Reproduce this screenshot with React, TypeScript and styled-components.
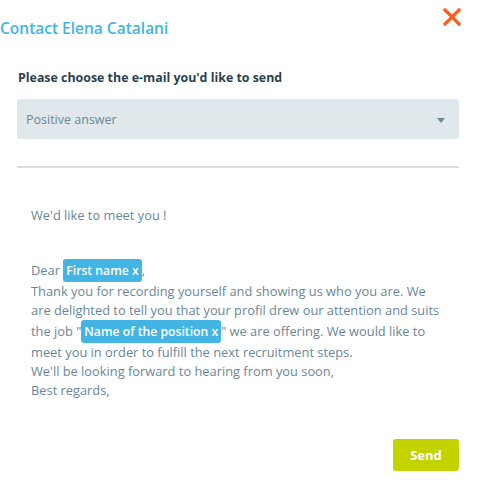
import React from "react";
import styled, { createGlobalStyle } from "styled-components";

const Global = createGlobalStyle`
  html, body { margin: 0; padding: 0; background: #fff; }
  body { font-family: "Open Sans", "Lato", sans-serif; }
  * { box-sizing: border-box; }
`;

const Modal = styled.div`
  width: 477px;
  height: 502px;
  display: flex;
  flex-direction: column;
  background: #fff;
`;

const Header = styled.div`
  display: flex;
  justify-content: space-between;
  align-items: flex-start;
  padding: 8px 16px 0 0;
  height: 60px;
`;

const Title = styled.h1`
  margin: 11px 0 0 0;
  font-size: 15.5px;
  line-height: 18px;
  font-weight: 600;
  color: #42b5e4;
`;

const Close = styled.button`
  border: none;
  background: none;
  padding: 0;
  width: 18px;
  height: 18px;
  cursor: pointer;
  display: flex;
`;

const Content = styled.div`
  padding: 0 18px 0 17px;
  display: flex;
  flex-direction: column;
`;

const Label = styled.label`
  font-size: 12.4px;
  font-weight: 700;
  color: #2c3f4e;
  margin: 10px 0 0 1px;
  line-height: 16px;
`;

const Select = styled.div`
  margin-top: 13px;
  height: 40px;
  background: #e1e8ec;
  border-radius: 3px;
  display: flex;
  align-items: center;
  justify-content: space-between;
  padding: 0 14px 0 9px;
  font-size: 12.5px;
  color: #6b8797;
`;

const Caret = styled.span`
  width: 0;
  height: 0;
  border-left: 4px solid transparent;
  border-right: 4px solid transparent;
  border-top: 5px solid #6b8797;
  margin-top: 2px;
`;

const Divider = styled.hr`
  border: none;
  height: 2px;
  background: #dddddd;
  margin: 27px 0 0 0;
`;

const Body = styled.div`
  padding: 38px 0 0 14px;
  font-size: 12.85px;
  color: #6a8797;
  line-height: 19px;
  white-space: nowrap;
`;

const Para = styled.p<{ $gap?: number }>`
  margin: 0 0 ${(p) => p.$gap ?? 0}px 0;
`;

const Chip = styled.span`
  display: inline-block;
  background: #42b5e4;
  color: #fff;
  font-weight: 600;
  font-size: 12.2px;
  border-radius: 3px;
  padding: 0 3px;
  line-height: 23px;
`;

const Footer = styled.div`
  display: flex;
  justify-content: flex-end;
  margin-top: 39px;
`;

const Send = styled.button`
  width: 66px;
  height: 32px;
  border: none;
  border-radius: 3px;
  background: #c2d300;
  color: #fff;
  font-family: inherit;
  font-weight: 700;
  font-size: 13px;
  cursor: pointer;
`;

export default function App() {
  return (
    <>
      <Global />
      <Modal>
        <Header>
          <Title>Contact Elena Catalani</Title>
          <Close aria-label="Close">
            <svg width="18" height="18" viewBox="0 0 18 18">
              <path d="M2 2 L16 16 M16 2 L2 16" stroke="#ff5b1e" strokeWidth="3.2" strokeLinecap="square" />
            </svg>
          </Close>
        </Header>
        <Content>
          <Label>Please choose the e-mail you'd like to send</Label>
          <Select>
            <span>Positive answer</span>
            <Caret />
          </Select>
          <Divider />
          <Body>
            <Para $gap={34}>We'd like to meet you !</Para>
            <Para>
              Dear <Chip>First name x</Chip>,<br />
              Thank you for recording yourself and showing us who you are. We<br />
              are delighted to tell you that your profil drew our attention and suits<br />
              the job "<Chip>Name of the position x</Chip>" we are offering. We would like to<br />
              meet you in order to fulfill the next recruitment steps.<br />
              We'll be looking forward to hearing from you soon,<br />
              Best regards,
            </Para>
          </Body>
          <Footer>
            <Send>Send</Send>
          </Footer>
        </Content>
      </Modal>
    </>
  );
}
